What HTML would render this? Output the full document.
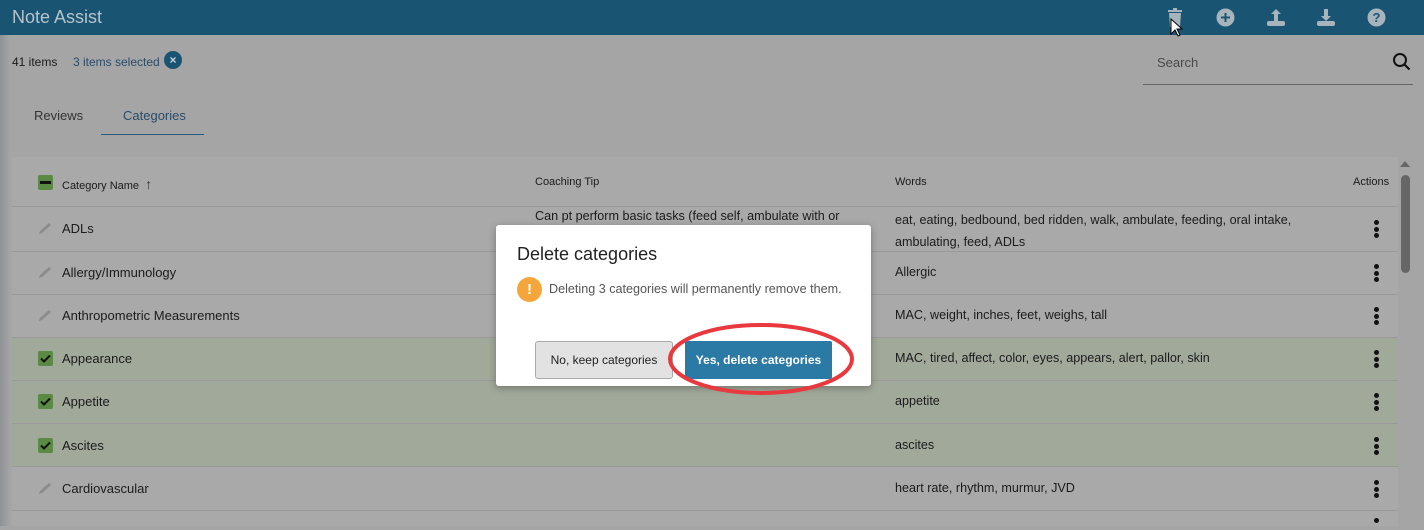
<!DOCTYPE html>
<html><head><meta charset="utf-8"><style>
*{margin:0;padding:0;box-sizing:border-box}
body{width:1424px;height:526px;overflow:hidden;background:#a5a5a5;font-family:"Liberation Sans",sans-serif;color:#1b1b1b;position:relative}
.top{position:absolute;left:0;top:0;width:1424px;height:35px;background:#1a5473}
.top .t{position:absolute;left:12px;top:7px;font-size:18px;color:#b7c3cb}
.ic{position:absolute;top:8px}
.leftstrip{position:absolute;left:0;top:35px;width:10px;height:491px;background:linear-gradient(90deg,#8e9195,#a5a5a5)}
.abs{position:absolute;white-space:nowrap}
.tbl{position:absolute;left:12px;top:157px;width:1386px;height:369px;background:#a9a9a9}
.row{position:absolute;left:12px;width:1386px;border-top:1px solid #999}
.sel{background:#a1a99a}
.fs12{font-size:12px}
.fs13{font-size:13px}
.w{font-size:12.6px}
.dots{position:absolute;left:1374px;width:5px}
.dots i{display:block;width:5px;height:5px;border-radius:50%;background:#111;margin-bottom:1.5px}
</style></head><body>
<div class="top"><div class="t">Note Assist</div>
<svg class="ic" style="left:1166px" width="18" height="20" viewBox="0 0 18 20"><rect x="2" y="2" width="14" height="2" fill="#a8b4bb"/><rect x="7" y="0" width="4" height="2" fill="#a8b4bb"/><path d="M3 5h12l-1 14H4z" fill="#a8b4bb"/></svg>
<svg class="abs" style="left:1170px;top:18px" width="14" height="20" viewBox="0 0 14 20"><path d="M1 1v15l4-4 3 6 2-1-3-6h5z" fill="#fff" stroke="#000"/></svg>
<svg class="ic" style="left:1216px" width="19" height="19"><circle cx="9.5" cy="9.5" r="9" fill="#a8b4bb"/><path d="M9.5 5v9M5 9.5h9" stroke="#1a5473" stroke-width="2"/></svg>
<svg class="ic" style="left:1266px" width="20" height="19"><path d="M10 1l-5 5h3v7h4V6h3z" fill="#a8b4bb"/><rect x="1" y="13" width="18" height="5" rx="2" fill="#a8b4bb"/></svg>
<svg class="ic" style="left:1316px" width="20" height="19"><path d="M10 13l-5-5h3V1h4v7h3z" fill="#a8b4bb"/><rect x="1" y="13" width="18" height="5" rx="2" fill="#a8b4bb"/></svg>
<svg class="ic" style="left:1367px" width="19" height="19"><circle cx="9.5" cy="9.5" r="9" fill="#a8b4bb"/><text x="9.5" y="14" text-anchor="middle" font-size="13" font-weight="bold" fill="#1a5473" font-family="Liberation Sans">?</text></svg>
</div>
<div class="leftstrip"></div>
<div class="abs fs12" style="left:12px;top:55px">41 items</div>
<div class="abs fs12" style="left:73px;top:55px;color:#2a4b6a">3 items selected</div>
<div class="abs" style="left:164px;top:51px;width:18px;height:18px;border-radius:50%;background:#1a5473;color:#c9d3d9;font-size:12px;text-align:center;line-height:18px;font-weight:bold">×</div>
<div class="abs fs13" style="left:1157px;top:55px;color:#4a4a4a">Search</div>
<div class="abs" style="left:1143px;top:84px;width:270px;border-top:1px solid #666"></div>
<svg class="abs" style="left:1392px;top:52px" width="20" height="20"><circle cx="8" cy="8" r="6" fill="none" stroke="#111" stroke-width="2"/><path d="M12.5 12.5l5 5" stroke="#111" stroke-width="2.2"/></svg>
<div class="abs fs13" style="left:34px;top:108px;color:#333">Reviews</div>
<div class="abs fs13" style="left:123px;top:108px;color:#2a4b6a">Categories</div>
<div class="abs" style="left:101px;top:134px;width:103px;border-top:1px solid #2b5a7a"></div>
<div class="tbl"></div>
<div class="abs" style="left:38px;top:175px;width:15px;height:15px;background:#5b8a45;border-radius:2px"><div style="margin:6px 2px;height:3px;background:#111"></div></div>
<div class="abs" style="left:62px;top:176px;font-size:11px">Category Name&nbsp; <span style="font-size:14px;color:#333">↑</span></div>
<div class="abs" style="left:535px;top:176px;font-size:11px">Coaching Tip</div>
<div class="abs" style="left:895px;top:176px;font-size:11px">Words</div>
<div class="abs" style="left:1353px;top:176px;font-size:11px">Actions</div>
<div class="abs" style="left:1400px;top:161px;width:0;height:0;border-left:5px solid transparent;border-right:5px solid transparent;border-bottom:6px solid #666"></div>
<div class="abs" style="left:1401px;top:175px;width:9px;height:98px;border-radius:5px;background:#666"></div>

<div class="row" style="top:206px;height:45px"></div>
<div class="row" style="top:251px;height:43px"></div>
<div class="row" style="top:294px;height:43px"></div>
<div class="row sel" style="top:337px;height:43px"></div>
<div class="row sel" style="top:380px;height:43px"></div>
<div class="row sel" style="top:423px;height:43px"></div>
<div class="row" style="top:466px;height:44px"></div>
<div class="row" style="top:510px;height:20px"></div>

<div class="abs fs13" style="left:62px;top:221px">ADLs</div>
<div class="abs fs13" style="left:62px;top:265px">Allergy/Immunology</div>
<div class="abs fs13" style="left:62px;top:308px">Anthropometric Measurements</div>
<div class="abs fs13" style="left:62px;top:351px">Appearance</div>
<div class="abs fs13" style="left:62px;top:394px">Appetite</div>
<div class="abs fs13" style="left:62px;top:438px">Ascites</div>
<div class="abs fs13" style="left:62px;top:481px">Cardiovascular</div>
<div class="abs w" style="left:535px;top:209px">Can pt perform basic tasks (feed self, ambulate with or</div>
<div class="abs w" style="left:895px;top:209px;line-height:22px">eat, eating, bedbound, bed ridden, walk, ambulate, feeding, oral intake,<br>ambulating, feed, ADLs</div>
<div class="abs w" style="left:895px;top:265px">Allergic</div>
<div class="abs w" style="left:895px;top:308px">MAC, weight, inches, feet, weighs, tall</div>
<div class="abs w" style="left:895px;top:351px">MAC, tired, affect, color, eyes, appears, alert, pallor, skin</div>
<div class="abs w" style="left:895px;top:394px">appetite</div>
<div class="abs w" style="left:895px;top:438px">ascites</div>
<div class="abs w" style="left:895px;top:481px">heart rate, rhythm, murmur, JVD</div>

<svg class="abs" style="left:37px;top:222px" width="16" height="14"><path d="M2 12l3-1 9-8-2-2-9 8z" fill="#8c8c8c"/></svg>
<svg class="abs" style="left:37px;top:266px" width="16" height="14"><path d="M2 12l3-1 9-8-2-2-9 8z" fill="#8c8c8c"/></svg>
<svg class="abs" style="left:37px;top:309px" width="16" height="14"><path d="M2 12l3-1 9-8-2-2-9 8z" fill="#8c8c8c"/></svg>
<svg class="abs" style="left:37px;top:482px" width="16" height="14"><path d="M2 12l3-1 9-8-2-2-9 8z" fill="#8c8c8c"/></svg>
<svg class="abs" style="left:38px;top:351px" width="15" height="15"><rect width="15" height="15" rx="2" fill="#5b8a45"/><path d="M3 7.5l3 3 6-6" stroke="#111" stroke-width="2" fill="none"/></svg>
<svg class="abs" style="left:38px;top:394px" width="15" height="15"><rect width="15" height="15" rx="2" fill="#5b8a45"/><path d="M3 7.5l3 3 6-6" stroke="#111" stroke-width="2" fill="none"/></svg>
<svg class="abs" style="left:38px;top:438px" width="15" height="15"><rect width="15" height="15" rx="2" fill="#5b8a45"/><path d="M3 7.5l3 3 6-6" stroke="#111" stroke-width="2" fill="none"/></svg>

<div class="dots" style="top:220px"><i></i><i></i><i></i></div>
<div class="dots" style="top:264px"><i></i><i></i><i></i></div>
<div class="dots" style="top:307px"><i></i><i></i><i></i></div>
<div class="dots" style="top:350px"><i></i><i></i><i></i></div>
<div class="dots" style="top:393px"><i></i><i></i><i></i></div>
<div class="dots" style="top:437px"><i></i><i></i><i></i></div>
<div class="dots" style="top:480px"><i></i><i></i><i></i></div>
<div class="dots" style="top:518px"><i></i></div>

<div class="abs" style="left:496px;top:225px;width:375px;height:161px;background:#fff;border-radius:3px;box-shadow:0 2px 8px rgba(0,0,0,.3)">
<div class="abs" style="left:21px;top:19px;font-size:18px;color:#222">Delete categories</div>
<div class="abs" style="left:21px;top:52px;width:25px;height:25px;border-radius:50%;background:#f4a63b;color:#fff;font-weight:bold;text-align:center;line-height:25px;font-size:15px">!</div>
<div class="abs" style="left:53px;top:57px;font-size:12.6px;color:#555">Deleting 3 categories will permanently remove them.</div>
<div class="abs" style="left:39px;top:116px;width:138px;height:38px;background:#e2e2e2;border:1px solid #aaa;border-radius:3px;font-size:12px;text-align:center;line-height:36px;color:#222">No, keep categories</div>
<div class="abs" style="left:189px;top:116px;width:147px;height:38px;background:#2a7aa5;border-radius:2px;font-size:12px;font-weight:bold;text-align:center;line-height:38px;color:#fff">Yes, delete categories</div>
</div>
<svg class="abs" style="left:664px;top:320px" width="196" height="78"><ellipse cx="97" cy="39" rx="91" ry="34" fill="none" stroke="#e8393f" stroke-width="4"/></svg>
</body></html>
